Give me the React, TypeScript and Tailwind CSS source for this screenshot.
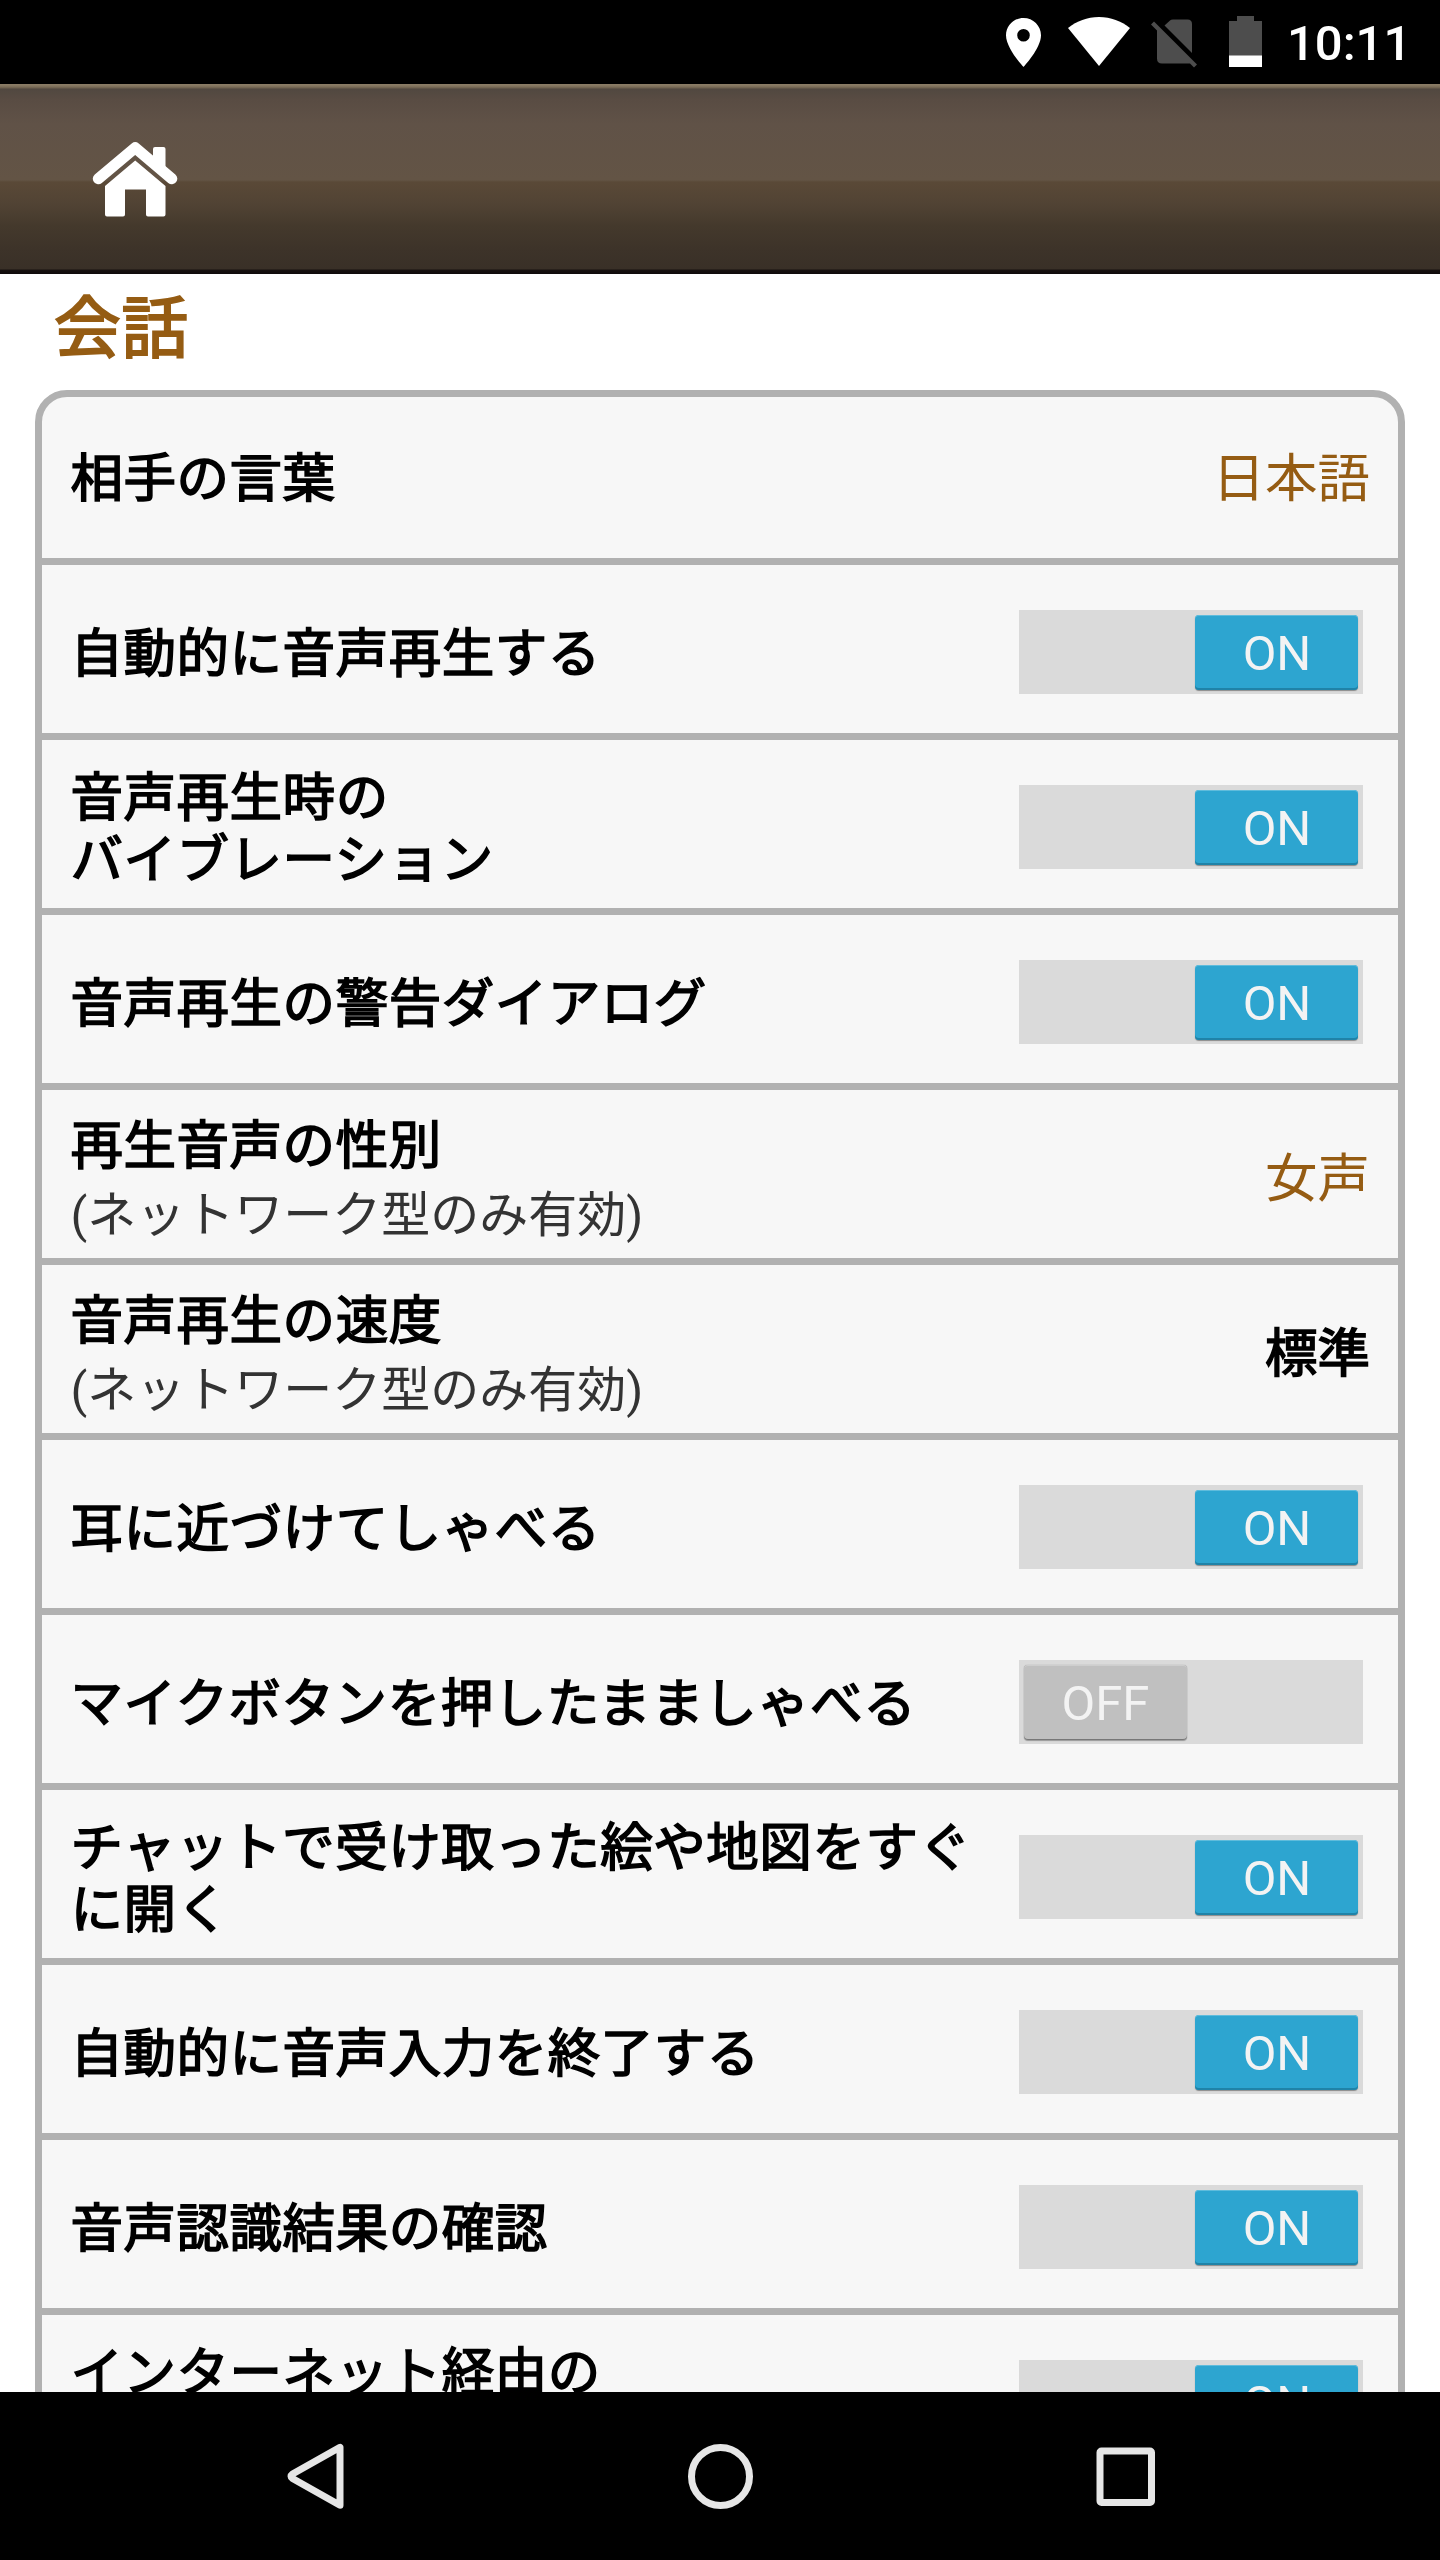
type Setting = {
  label: string[]
  note?: string
  on?: boolean
  value?: string
  strong?: boolean
}

const networkOnly = '(ネットワーク型のみ有効)'

const settings: Setting[] = [
  { label: ['相手の言葉'], value: '日本語' },
  { label: ['自動的に音声再生する'], on: true },
  { label: ['音声再生時の', 'バイブレーション'], on: true },
  { label: ['音声再生の警告ダイアログ'], on: true },
  { label: ['再生音声の性別'], note: networkOnly, value: '女声' },
  { label: ['音声再生の速度'], note: networkOnly, value: '標準', strong: true },
  { label: ['耳に近づけてしゃべる'], on: true },
  { label: ['マイクボタンを押したまましゃべる'], on: false },
  { label: ['チャットで受け取った絵や地図をすぐ', 'に開く'], on: true },
  { label: ['自動的に音声入力を終了する'], on: true },
  { label: ['音声認識結果の確認'], on: true },
  { label: ['インターネット経由の'], on: true },
]

export default function App() {
  return (
    <div className="flex h-[2560px] w-[1440px] flex-col overflow-hidden bg-white font-['Roboto','Noto_Sans_CJK_JP',sans-serif]">
      <StatusBar />
      <Header />
      <main className="min-h-0 flex-1 overflow-hidden px-[35px]">
        <h1 className="h-[116px] pt-[7px] pl-[19px] text-[66.5px] leading-[96px] tracking-[1px] text-[#955c13] [-webkit-text-stroke:2.1px_#955c13]">
          会話
        </h1>
        <ul>
          {settings.map((setting, i) => (
            <Row
              key={setting.label[0]}
              setting={setting}
              first={i === 0}
              last={i === settings.length - 1}
            />
          ))}
        </ul>
      </main>
      <NavBar />
    </div>
  )
}

function StatusBar() {
  return (
    <div className="flex h-[84px] shrink-0 items-start bg-black pl-[1006px]">
      <svg width="280" height="84" viewBox="1006 0 280 84" className="shrink-0">
        <path
          d="M1023.5 18c-9.7 0-17.5 7.8-17.5 17.3C1006 48.5 1023.5 67 1023.5 67S1041 48.5 1041 35.3C1041 25.8 1033.2 18 1023.5 18zm0 23.500a6.300 6.300 0 1 1 0-12.600 6.300 6.300 0 0 1 0 12.600z"
          fill="#fff"
        />
        <path d="M1099 66 1068 28C1077 21 1087 17 1099 17s22 4 31 11z" fill="#fff" />
        <path
          d="M1164.500 25.500 1170 20.500Q1171 19.500 1173 19.500h14.500q4.500 0 4.500 4.500v29z"
          fill="#4d4d4d"
        />
        <path
          d="M1151 24.500 1154 21.500 1197 64.500 1194 67.500 1190 63.500h-8H1162q-5 0-5-5V30.500z"
          fill="#4d4d4d"
        />
        <path d="M1229 21h8v-5h17v5h8v35h-33z" fill="#4d4d4d" />
        <path d="M1229 55.500h33V67h-33z" fill="#fff" />
      </svg>
      <span className="pt-[15px] pl-px text-[49px] leading-[57px] font-medium text-white">
        10:11
      </span>
    </div>
  )
}

function Header() {
  return (
    <header className="h-[190px] shrink-0 bg-[linear-gradient(#8b7d67_0px,#83755f_2px,#6c5f4e_4px,#514840_5px,#594c43_16px,#605247_40px,#635445_96px,#5a4937_98px,#514334_120px,#44392c_142px,#3d3329_165px,#393027_185px,#17110f_186px,#0f0a0a_190px)] pt-[56px] pl-[91px]">
      <svg width="88" height="78" viewBox="91 139.500 88 78">
        <path
          d="M98.300 178.200 135.200 147.300 171.800 178.200"
          fill="none"
          stroke="#fff"
          strokeWidth="11"
          strokeLinecap="round"
          strokeLinejoin="round"
        />
        <path d="M153 162V148.500q0-2 2-2h8.500q2 0 2 2V173z" fill="#fff" />
        <path
          d="M135.200 160 165.500 185.500v28.500q0 2-2 2h-15.500q-2 0-2-2V189h-21v25q0 2-2 2h-16q-2 0-2-2V185.500z"
          fill="#fff"
        />
      </svg>
    </header>
  )
}

function Row({
  setting,
  first,
  last,
}: {
  setting: Setting
  first: boolean
  last: boolean
}) {
  const { label, note, on, value, strong } = setting
  return (
    <li
      className={`flex h-[175px] justify-between border-x-[7px] border-[#b1b1b1] bg-[#f7f7f7] px-7 ${
        first ? 'rounded-t-[32px] border-t-[7px]' : 'pt-[7px]'
      } ${last ? 'items-start' : 'items-center border-b-[7px]'}`}
    >
      <div
        className={`pl-[0.5px] whitespace-nowrap ${
          note ? 'pt-[9px]' : 'pt-[3px]'
        } ${last ? 'mt-[17px]' : ''}`}
      >
        {label.map(line => (
          <p
            key={line}
            className="text-[52.5px] leading-[62px] tracking-[0.53px] text-black [-webkit-text-stroke:1.64px_black]"
          >
            {line}
          </p>
        ))}
        {note && (
          <p className="pt-[5px] text-[49px] leading-[68px] text-[#333]">{note}</p>
        )}
      </div>
      {value && (
        <span
          className={`pt-[3px] text-[52.5px] leading-[62px] ${
            strong
              ? 'text-black [-webkit-text-stroke:1.64px_black]'
              : 'text-[#955c13]'
          }`}
        >
          {value}
        </span>
      )}
      {on !== undefined && (
        <div className={last ? 'mt-[38px]' : 'mb-px'}>
          <Toggle on={on} />
        </div>
      )}
    </li>
  )
}

function Toggle({ on }: { on: boolean }) {
  return (
    <div
      className={`mr-[7px] flex h-[84px] w-[344px] bg-[#dadada] px-[5px] pt-[5px] pb-1 ${
        on ? 'justify-end' : ''
      }`}
    >
      <div
        className={`w-[163px] rounded-[4px] text-center text-[49px] leading-[78px] text-[#f3f3f3] ${
          on
            ? 'bg-[#2da5d0] pl-px shadow-[inset_0_1px_#5fbcdc,inset_0_-2px_#1f83a8,0_1px_1px_#8a8a8a]'
            : 'bg-[#c0c0c0] shadow-[inset_0_1px_#cecece,inset_0_-1px_#777,0_1px_1px_#999,0_0_1px_#888]'
        }`}
      >
        {on ? 'ON' : 'OFF'}
      </div>
    </div>
  )
}

function NavBar() {
  return (
    <nav className="h-[168px] shrink-0 bg-black">
      <svg
        width="1440"
        height="168"
        viewBox="0 0 1440 168"
        fill="none"
        stroke="#e6e6e6"
        strokeWidth="7"
        strokeLinejoin="round"
      >
        <path d="M340 55.300v58L292.500 86.500q-3-2.200 0-4.500z" />
        <circle cx="720.500" cy="84.400" r="29" />
        <rect x="1100" y="59" width="51.500" height="51.500" rx="1.500" />
      </svg>
    </nav>
  )
}
